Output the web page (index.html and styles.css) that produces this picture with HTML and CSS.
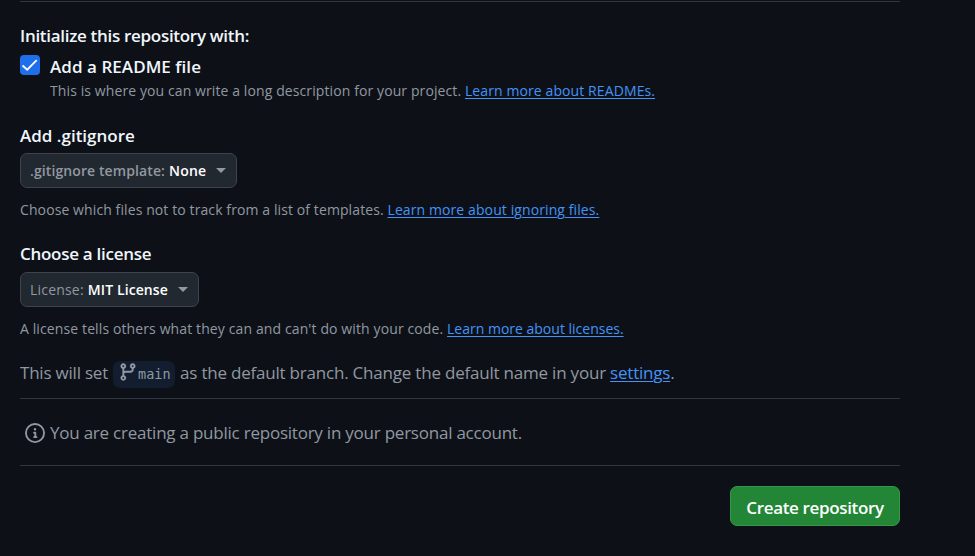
FILE: index.html
```html
<!DOCTYPE html>
<html lang="en">
<head>
<meta charset="utf-8">
<title>Create a new repository</title>
<link rel="stylesheet" href="styles.css">
</head>
<body>
<main class="form">
  <hr class="divider">
  <h2 class="heading init-heading">Initialize this repository with:</h2>
  <div class="option">
    <span class="checkbox" role="checkbox" aria-checked="true">
      <svg width="20" height="20" viewBox="0 0 20 20"><path d="M2.500 10.500l4.700 4.200 9.500-9.500" fill="none" stroke="#fff" stroke-width="1.800"/></svg>
    </span>
    <div>
      <div class="heading readme-label">Add a README file</div>
      <p class="note readme-note">This is where you can write a long description for your project. <a href="#">Learn more about READMEs.</a></p>
    </div>
  </div>
  <h2 class="heading gitignore-heading">Add .gitignore</h2>
  <button class="select select-gitignore"><span class="key">.gitignore template:</span><span class="value">None</span><i class="caret"></i></button>
  <p class="note">Choose which files not to track from a list of templates. <a href="#">Learn more about ignoring files.</a></p>
  <h2 class="heading license-heading">Choose a license</h2>
  <button class="select select-license"><span class="key">License:</span><span class="value">MIT License</span><i class="caret"></i></button>
  <p class="note license-note">A license tells others what they can and can't do with your code. <a href="#" class="license-link">Learn more about licenses.</a></p>
  <div class="branch-row">
    <span class="line-text">This will set</span>
    <span class="branch"><svg width="20" height="20" viewBox="0 0 16 16" fill="currentColor"><path d="M9.5 3.25a2.25 2.25 0 1 1 3 2.122V6A2.5 2.5 0 0 1 10 8.500H6a1 1 0 0 0-1 1v1.128a2.251 2.251 0 1 1-1.500 0V5.372a2.250 2.250 0 1 1 1.500 0v1.836A2.493 2.493 0 0 1 6 7h4a1 1 0 0 0 1-1v-.628A2.250 2.250 0 0 1 9.500 3.250Zm-6 0a.750.750 0 1 0 1.500 0 .750.750 0 0 0-1.500 0Zm8.250-.750a.750.750 0 1 0 0 1.500.750.750 0 0 0 0-1.500ZM4.250 12a.750.750 0 1 0 0 1.500.750.750 0 0 0 0-1.500Z"/></svg><code>main</code></span>
    <span class="line-text">as the default branch. Change the default name in your <a href="#">settings</a>.</span>
  </div>
  <hr class="divider">
  <div class="info-row">
    <svg width="20" height="20" viewBox="0 0 16 16" fill="currentColor"><path d="M0 8a8 8 0 1 1 16 0A8 8 0 0 1 0 8Zm8-6.500a6.500 6.500 0 1 0 0 13 6.500 6.500 0 0 0 0-13ZM6.500 7.750A.750.750 0 0 1 7.250 7h1a.750.750 0 0 1 .750.750v2.750h.250a.750.750 0 0 1 0 1.500h-2a.750.750 0 0 1 0-1.500h.250v-2h-.250a.750.750 0 0 1-.750-.750ZM8 6a1 1 0 1 1 0-2 1 1 0 0 1 0 2Z"/></svg>
    <span class="info">You are creating a public repository in your personal account.</span>
  </div>
  <hr class="divider">
  <div class="actions"><button class="create"><span>Create repository</span></button></div>
</main>
</body>
</html>
```
FILE: styles.css
```css
* { box-sizing: border-box; }
body {
  margin: 0;
  height: 556px;
  overflow: hidden;
  background: #0d1117;
  color: #f0f6fc;
  font-family: "Open Sans", "Noto Sans", sans-serif;
}
button { font-family: inherit; }
a { color: #4493f8; text-decoration: underline; text-underline-offset: 2px; text-decoration-thickness: 1px; }
.form { width: 880px; margin-left: 20px; padding-top: 1px; white-space: nowrap; }
.divider { height: 1px; margin: 0; border: 0; background: #30363d; }
.heading { margin: 0; height: 24px; line-height: 24px; font-size: 17px; font-weight: 600; letter-spacing: -0.3px; }
.init-heading { margin-top: 22px; }
.option { display: flex; gap: 10px; height: 68px; padding-top: 7px; }
.checkbox { width: 20px; height: 20px; border-radius: 4px; background: #1f6feb; }
.checkbox svg { display: block; }
.readme-label { letter-spacing: 0.05px; }
.note { margin: 0; height: 22px; line-height: 22px; margin-top: 11px; font-size: 14px; color: #9198a1; letter-spacing: 0.1px; }
.readme-note { margin-top: 1px; }
.license-note { letter-spacing: 0.115px; }
.license-link { letter-spacing: 0; }
.gitignore-heading { margin-top: 8px; letter-spacing: 0; }
.license-heading { margin-top: 21px; letter-spacing: -0.28px; }
.select {
  display: flex;
  align-items: center;
  height: 35px;
  margin-top: 5px;
  padding: 0 10px 0 9px;
  border: 1px solid #3d444d;
  border-radius: 7px;
  background: #212830;
  color: #fff;
  font-size: 14px;
  font-weight: 600;
}
.select-license { width: 179px; margin-top: 6px; }
.select-gitignore { width: 217px; }
.key { color: #9198a1; margin-right: 4px; letter-spacing: 0.1px; }
.select-gitignore .value { letter-spacing: 0.2px; }
.select-license .key { font-weight: 500; letter-spacing: 0.2px; }
.select-license .value { letter-spacing: 0.1px; }
.caret { margin-left: auto; border: 5px solid transparent; border-top-color: #9198a1; border-bottom: 0; }
.branch-row { display: flex; align-items: center; height: 28px; margin-top: 20px; margin-bottom: 10px; font-size: 17px; color: #9198a1; letter-spacing: -0.21px; }
.line-text { margin-top: -3px; }
.branch { display: flex; align-items: center; width: 62px; height: 27px; margin: 0 5px; padding-left: 5px; border-radius: 7px; background: #121d2f; }
.branch svg { margin-top: -4px; }
.branch code { font-family: "DejaVu Sans Mono", monospace; font-size: 13.500px; letter-spacing: 0; }
.info-row { display: flex; align-items: center; gap: 5px; height: 66px; padding-left: 5px; padding-top: 2px; font-size: 17px; color: #9198a1; letter-spacing: -0.23px; }
.info { margin-top: -2px; }
.actions { display: flex; justify-content: flex-end; padding-top: 20px; }
.create { width: 170px; height: 40px; padding: 2px 0 0; border: 1px solid #389649; border-radius: 7px; background: #238636; color: #fff; font-size: 17px; font-weight: 600; letter-spacing: -0.35px; }
```
